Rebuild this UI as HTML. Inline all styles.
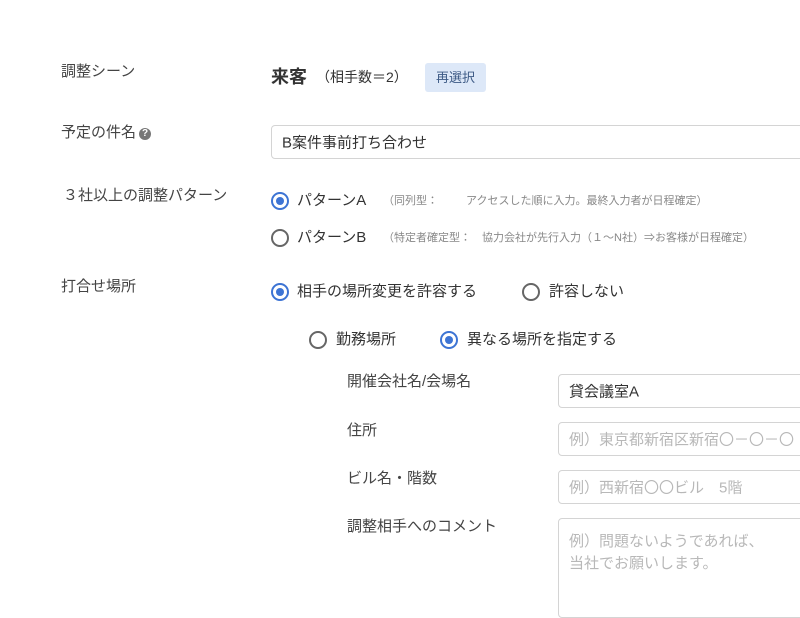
<!DOCTYPE html>
<html><head><meta charset="utf-8"><style>
body{margin:0;width:800px;height:600px;background:#fff;overflow:hidden;position:relative;font-family:"Liberation Sans","Noto Sans CJK JP",sans-serif;color:#333}
.a{position:absolute;white-space:nowrap;line-height:1}
.l{font-size:15px;color:#444}
.r{position:absolute;width:14px;height:14px;border:2px solid #666;border-radius:50%;box-sizing:content-box}
.r.on{border-color:#3d74d4}
.r.on::after{content:"";position:absolute;left:3px;top:3px;width:8px;height:8px;border-radius:50%;background:#3d74d4}
.t{font-size:15px;color:#333}
.in{position:absolute;border:1px solid #d4d4d4;border-radius:4px;box-sizing:border-box;background:#fff}
.in span{position:absolute;left:10px;top:50%;transform:translateY(-50%);font-size:15px;white-space:nowrap}
.ph{color:#b8b8b8}
.s{font-size:11px;color:#888}
</style></head><body>
<div class="a l" style="left:61px;top:64px">調整シーン</div>
<div class="a" style="left:271px;top:68px;font-size:18px;font-weight:bold;color:#333">来客</div>
<div class="a" style="left:316px;top:70px;font-size:14px">（相手数＝2）</div>
<div class="a" style="left:425px;top:63px;width:61px;height:29px;background:#dde8f8;border-radius:3px;font-size:13px;color:#3d5a85;line-height:29px;text-align:center">再選択</div>

<div class="a l" style="left:61px;top:125px">予定の件名<span style="display:inline-block;width:12px;height:12px;border-radius:50%;background:#777;color:#fff;font-size:10px;line-height:12px;text-align:center;font-weight:bold;margin-left:3px;vertical-align:1px">?</span></div>
<div class="in" style="left:271px;top:125px;width:560px;height:34px"><span>B案件事前打ち合わせ</span></div>

<div class="a l" style="left:63px;top:188px">３社以上の調整パターン</div>
<div class="r on" style="left:271px;top:192px"></div>
<div class="a t" style="left:297px;top:193px">パターンA</div>
<div class="a s" style="left:383px;top:196px">（同列型：</div>
<div class="a s" style="left:466px;top:196px">アクセスした順に入力。最終入力者が日程確定）</div>
<div class="r" style="left:271px;top:229px"></div>
<div class="a t" style="left:297px;top:230px">パターンB</div>
<div class="a s" style="left:383px;top:233px">（特定者確定型：　協力会社が先行入力（１～N社）⇒お客様が日程確定）</div>

<div class="a l" style="left:61px;top:279px">打合せ場所</div>
<div class="r on" style="left:271px;top:283px"></div>
<div class="a t" style="left:297px;top:284px">相手の場所変更を許容する</div>
<div class="r" style="left:522px;top:283px"></div>
<div class="a t" style="left:549px;top:284px">許容しない</div>

<div class="r" style="left:309px;top:331px"></div>
<div class="a t" style="left:336px;top:332px">勤務場所</div>
<div class="r on" style="left:440px;top:331px"></div>
<div class="a t" style="left:467px;top:332px">異なる場所を指定する</div>

<div class="a l" style="left:347px;top:374px">開催会社名/会場名</div>
<div class="in" style="left:558px;top:374px;width:260px;height:34px"><span>貸会議室A</span></div>
<div class="a l" style="left:347px;top:423px">住所</div>
<div class="in" style="left:558px;top:422px;width:260px;height:34px"><span class="ph">例）東京都新宿区新宿〇－〇－〇</span></div>
<div class="a l" style="left:347px;top:471px">ビル名・階数</div>
<div class="in" style="left:558px;top:470px;width:260px;height:34px"><span class="ph">例）西新宿〇〇ビル　5階</span></div>
<div class="a l" style="left:347px;top:519px">調整相手へのコメント</div>
<div class="in" style="left:558px;top:518px;width:260px;height:100px"><div class="a ph" style="left:10px;top:12px;font-size:15px;line-height:22px">例）問題ないようであれば、<br>当社でお願いします。</div></div>
</body></html>
